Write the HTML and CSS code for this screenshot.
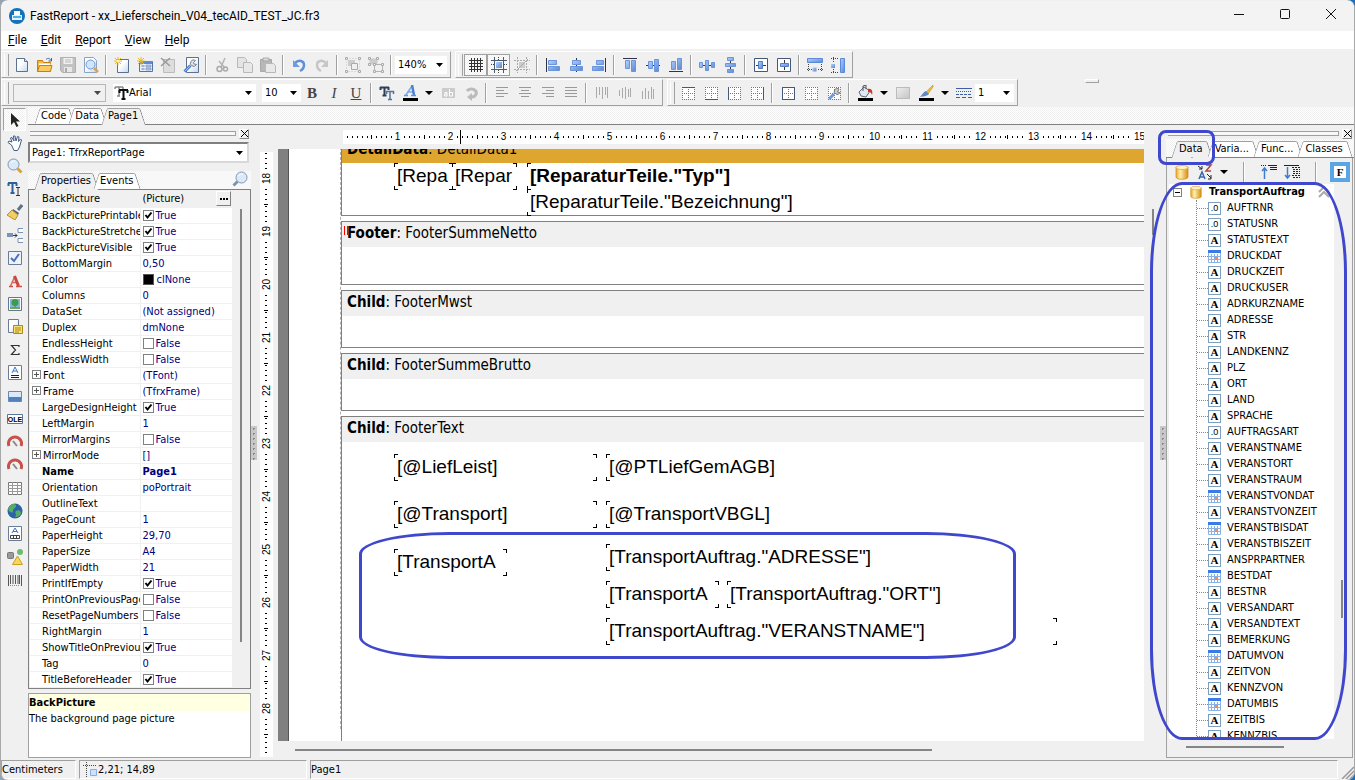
FILE: index.html
```html
<!DOCTYPE html>
<html lang="en">

<head>
    <meta charset="UTF-8">
    <meta name="viewport" content="width=device-width, initial-scale=1.0">
    <title>FastReport - xx_Lieferschein_V04_tecAID_TEST_JC.fr3</title>
    <link rel="stylesheet" href="styles.css">
</head>

<body>
    <!-- icon sprite -->
    <svg class="sprite" aria-hidden="true">
        <defs>
            <linearGradient id="blue" x1="0" y1="0" x2="1" y2="1"><stop offset="0" stop-color="#b4d2fb"/><stop offset="1" stop-color="#5b86d6"/></linearGradient>
            <linearGradient id="page" x1="0" y1="0" x2="1" y2="1"><stop offset="0.4" stop-color="#fff"/><stop offset="1" stop-color="#c4d6f0"/></linearGradient>
            <linearGradient id="gold" x1="0" y1="0" x2="1" y2="0"><stop offset="0" stop-color="#e9a928"/><stop offset="0.35" stop-color="#fff0b0"/><stop offset="1" stop-color="#d98c10"/></linearGradient>
            <linearGradient id="gray" x1="0" y1="0" x2="1" y2="1"><stop offset="0" stop-color="#eee"/><stop offset="1" stop-color="#c4c4c4"/></linearGradient>
        </defs>
        <symbol id="i-app" viewBox="0 0 16 16"><circle cx="8" cy="8" r="8" fill="#1672b8"/><path d="M5 3h6v4H5z" fill="#fff"/><path d="M3 7h10v5H3z" fill="#dff2ff"/><path d="M4 8h8v2H4z" fill="#4db4ea"/></symbol>
        <symbol id="i-new" viewBox="0 0 16 16"><path d="M2.500 1.500h8l3 3v10h-11z" fill="url(#page)" stroke="#5a7290"/><path d="M10.500 1.500v3h3" fill="#dbe6f5" stroke="#5a7290"/></symbol>
        <symbol id="i-open" viewBox="0 0 16 16"><path d="M.5 14.500v-11h5l1 2h7v9z" fill="#f4b744" stroke="#c77e12"/><path d="M2 6.500h11.500v2H2z" fill="#fff"/><path d="M.5 14.500l2-6h12.500l-1.500 6z" fill="#fbc95c" stroke="#c77e12"/><path d="M9 2.500c2-2 4-1 5 1M14.500 1v3h-3" fill="none" stroke="#3a66a8"/></symbol>
        <symbol id="i-save" viewBox="0 0 16 16"><path d="M.5 .5h15v15h-13l-2-2z" fill="#c2c2c2" stroke="#b0b0b0"/><path d="M3.500 1h9v6h-9z" fill="#f0f0f0"/><path d="M5 3h6M5 5h6" stroke="#bbb"/><path d="M4 10h8v5H4z" fill="#e8e8e8"/><path d="M5 11h2v4H5z" fill="#aaa"/></symbol>
        <symbol id="i-preview" viewBox="0 0 16 16"><path d="M1.500 .5h9l3 3v12h-12z" fill="url(#page)" stroke="#8ba3c4"/><circle cx="7.500" cy="7.500" r="4.500" fill="#cfe6fb" stroke="#6f9bd0"/><path d="M11 11l4 4" stroke="#e0a050" stroke-width="2.500"/></symbol>
        <symbol id="i-newpage" viewBox="0 0 16 16"><path d="M3.500 2.500h11v13h-11z" fill="url(#page)" stroke="#5a7290"/><path d="M4 0v8M0 4h8M1 1l6 6M7 1L1 7" stroke="#e8b820"/><circle cx="4" cy="4" r="1.500" fill="#fff6a0"/></symbol>
        <symbol id="i-newdlg" viewBox="0 0 16 16"><path d="M2.500 4.500h13v10h-13z" fill="#e8f0fb" stroke="#5574a6"/><path d="M3 4h12v3H3z" fill="#5f8ad0"/><path d="M4.500 9h3M4.500 12h3" stroke="#5574a6"/><path d="M9 8h5v2H9zM9 11h5v2H9z" fill="#b8cdec" stroke="#5574a6" stroke-width=".5"/><path d="M4 0v8M0 4h8M1 1l6 6M7 1L1 7" stroke="#e8b820"/></symbol>
        <symbol id="i-delpage" viewBox="0 0 16 16"><path d="M3.500 2.500h11v13h-11z" fill="#ddd" stroke="#bbb"/><path d="M1 1l9 8M10 1L1 9" stroke="#999" stroke-width="1.500"/></symbol>
        <symbol id="i-wrenchpage" viewBox="0 0 16 16"><path d="M3.500 .5h12v15h-12z" fill="url(#page)" stroke="#5a7290"/><path d="M1.500 14.500l6-6" stroke="#4d7fc9" stroke-width="3"/><path d="M2 14l6-6" stroke="#9cc0f0"/><path d="M12.500 3.500a3.200 3.200 0 1 0 1 4l-2.500-.5-.5-1.500z" fill="#dfe4ea" stroke="#7a8490"/></symbol>
        <symbol id="i-cut" viewBox="0 0 16 16"><path d="M11 1L7 10M5 4l6 7" stroke="#b4b4b4" stroke-width="1.500" fill="none"/><circle cx="5.500" cy="12" r="2.500" fill="none" stroke="#aaa" stroke-width="1.500"/><circle cx="11.500" cy="12" r="2" fill="none" stroke="#aaa" stroke-width="1.500"/></symbol>
        <symbol id="i-copy" viewBox="0 0 16 16"><path d="M.5 .5h7l2 2v8h-9z" fill="#e4e4e4" stroke="#b8b8b8"/><path d="M6.500 5.500h7l2 2v8h-9z" fill="#e8e8e8" stroke="#b8b8b8"/></symbol>
        <symbol id="i-paste" viewBox="0 0 16 16"><path d="M.5 2.500h11v12H.5z" fill="#b8b8b8" stroke="#a8a8a8"/><path d="M3 1h6v3H3z" fill="#d8d8d8" stroke="#999" stroke-width=".7"/><path d="M5.500 6.500h8l2 2v7h-10z" fill="#e8e8e8" stroke="#b8b8b8"/></symbol>
        <symbol id="i-undo" viewBox="0 0 16 16"><path d="M4 6c4-4 9-2 9 2 0 3-2 5-4 6" fill="none" stroke="#5f8fd8" stroke-width="2.500"/><path d="M2 3v7h7z" fill="#6f9ce0"/></symbol>
        <symbol id="i-redo" viewBox="0 0 16 16"><path d="M12 6C8 2 3 4 3 8c0 3 2 5 4 6" fill="none" stroke="#c6c6c6" stroke-width="2.500"/><path d="M14 3v7H7z" fill="#c6c6c6"/></symbol>
        <symbol id="i-group" viewBox="0 0 16 16"><path d="M3 3h7v6H3z" fill="#ccc"/><path d="M6.500 6.500h6v6h-6z" fill="#f0f0f0" stroke="#aaa"/><path d="M1.500 1.500h13v13h-13z" fill="none" stroke="#c4c4c4" stroke-dasharray="1 2"/><path d="M.5 .5h2v2h-2zM13.500 .5h2v2h-2zM.5 13.500h2v2h-2zM13.500 13.500h2v2h-2z" fill="#f0f0f0" stroke="#aaa"/></symbol>
        <symbol id="i-ungroup" viewBox="0 0 16 16"><path d="M1.500 1.500h8v6h-8z" fill="#ccc"/><path d="M6.500 7.500h8v7h-8z" fill="#f0f0f0" stroke="#b4b4b4"/><path d="M.5 .5h2v2h-2zM8.500 .5h2v2h-2zM.5 6.500h2v2h-2zM5.500 6.500h2v2h-2zM13.500 6.500h2v2h-2zM5.500 13.500h2v2h-2zM13.500 13.500h2v2h-2z" fill="#f0f0f0" stroke="#aaa"/></symbol>
        <symbol id="i-grid" viewBox="0 0 16 16"><path d="M3.500 1v14M6.500 1v14M9.500 1v14M12.500 1v14M1 3.500h14M1 6.500h14M1 9.500h14M1 12.500h14" stroke="#333"/></symbol>
        <symbol id="i-snap" viewBox="0 0 16 16"><path d="M3.500 0v16M12.500 0v16M0 3.500h16M0 12.500h16" stroke="#4a5a70"/><path d="M5 5h6v6H5z" fill="url(#blue)"/><path d="M7.500 0v3M7.500 13v3M0 7.500h3M13 7.500h3" stroke="#444" stroke-dasharray="1 1"/></symbol>
        <symbol id="i-fitgrid" viewBox="0 0 16 16"><path d="M3.500 0v16M12.500 0v16M0 3.500h16M0 12.500h16" stroke="#aaa" stroke-dasharray="2 1"/><path d="M5 5h6v6H5z" fill="#ccc"/><path d="M2 14L14 2" stroke="#aaa"/></symbol>
        <symbol id="i-aleft" viewBox="0 0 16 16"><path d="M1.500 1v14" stroke="#334"/><path d="M3.500 3.500h8v4h-8zM3.500 9.500h11v4h-11z" fill="url(#blue)" stroke="#6a94dc"/></symbol>
        <symbol id="i-acenter" viewBox="0 0 16 16"><path d="M8.500 1v14" stroke="#334"/><path d="M4.500 3.500h8v4h-8zM2.500 9.500h12v4h-12z" fill="url(#blue)" stroke="#6a94dc"/></symbol>
        <symbol id="i-aright" viewBox="0 0 16 16"><path d="M14.500 1v14" stroke="#334"/><path d="M5.500 3.500h7v4h-7zM1.500 9.500h11v4h-11z" fill="url(#blue)" stroke="#6a94dc"/></symbol>
        <symbol id="i-atop" viewBox="0 0 16 16"><path d="M1 1.500h14" stroke="#334"/><path d="M3.500 3.500h4v8h-4zM9.500 3.500h4v11h-4z" fill="url(#blue)" stroke="#6a94dc"/></symbol>
        <symbol id="i-amid" viewBox="0 0 16 16"><path d="M1 8.500h14" stroke="#334"/><path d="M3.500 4.500h4v7h-4zM9.500 2.500h4v12h-4z" fill="url(#blue)" stroke="#6a94dc"/></symbol>
        <symbol id="i-abottom" viewBox="0 0 16 16"><path d="M1 14.500h14" stroke="#334"/><path d="M3.500 4.500h4v8h-4zM9.500 1.500h4v11h-4z" fill="url(#blue)" stroke="#6a94dc"/></symbol>
        <symbol id="i-sph" viewBox="0 0 16 16"><path d="M0 8.500h16" stroke="#334"/><path d="M.5 5.500h3v5h-3zM6.500 3.500h3v10h-3zM12.500 5.500h3v5h-3z" fill="url(#blue)" stroke="#6a94dc"/></symbol>
        <symbol id="i-spv" viewBox="0 0 16 16"><path d="M8.500 0v16" stroke="#334"/><path d="M5.500 .5h6v3h-6zM3.500 6.500h10v3h-10zM5.500 12.500h6v3h-6z" fill="url(#blue)" stroke="#6a94dc"/></symbol>
        <symbol id="i-ch" viewBox="0 0 16 16"><path d="M1.500 1.500h13v13h-13z" fill="#fff" stroke="#45587a"/><path d="M3 8.500h10" stroke="#334"/><path d="M5.500 4.500h4v7h-4z" fill="url(#blue)" stroke="#5580c8"/></symbol>
        <symbol id="i-cv" viewBox="0 0 16 16"><path d="M1.500 1.500h13v13h-13z" fill="#fff" stroke="#45587a"/><path d="M8.500 3v10" stroke="#334"/><path d="M4.500 6.500h8v3h-8z" fill="url(#blue)" stroke="#5580c8"/></symbol>
        <symbol id="i-samew" viewBox="0 0 16 16"><path d="M.5 1.500h15v4H.5z" fill="url(#blue)" stroke="#5b8ad8"/><path d="M5.500 10.500h4v4h-4z" fill="url(#blue)"/><path d="M1.500 7v8M14.500 7v8M0 12.500h5M11 12.500h5" stroke="#444" stroke-dasharray="1 1"/></symbol>
        <symbol id="i-sameh" viewBox="0 0 16 16"><path d="M10.500 1.500h4v14h-4z" fill="url(#blue)" stroke="#5b8ad8"/><path d="M1 7h4v4H1z" fill="url(#blue)"/><path d="M1 1.500h8M1 15.500h8M3.500 0v5M3.500 12v4" stroke="#444" stroke-dasharray="1 1"/></symbol>
        <symbol id="i-tt" viewBox="0 0 16 16"><path d="M2 2h8M6 2v9M4 11h3M2 2v2M10 2v2" stroke="#888" stroke-width="1.500" fill="none"/><path d="M6 5h9M10.500 5v9M8.500 14h4M6.500 5v3M14.500 5v3" stroke="#111" stroke-width="2" fill="none"/></symbol>
        <symbol id="i-ttb" viewBox="0 0 16 16"><path d="M1 2.500h9M5.500 2v8.500M3.500 10.500h4M1.500 2v3M9.500 2v3" stroke="#2e3f55" stroke-width="2" fill="none"/><path d="M7 6.500h8M11 6v8.500M9 14.500h4M7.500 6v3M14.500 6v3" stroke="#54749c" stroke-width="1.500" fill="none"/></symbol>
        <symbol id="i-color" viewBox="0 0 16 16"><path d="M2 10.500h4M9 10.500h5" stroke="#5a8fe0" stroke-width="1.500"/><path d="M3.500 10.500L10 1M6 7h5" stroke="#7aa8ec" stroke-width="1.500"/><path d="M10 0l2 10" stroke="#4a80d8" stroke-width="2.500"/><path d="M1 13h15v3H1z"/></symbol>
        <symbol id="i-hl" viewBox="0 0 16 16"><path d="M2 3h13v10H2z" fill="#ccc"/><path d="M4.500 7.500h2.500v3.500h-2.500v-2h2.500M9.500 4v7h3V7.500h-3" fill="none" stroke="#fff"/></symbol>
        <symbol id="i-rot" viewBox="0 0 16 16"><path d="M4 6a5 4 0 1 1 5 6" fill="none" stroke="#bbb" stroke-width="3"/><path d="M9 8v8l-5-4z" fill="#bbb"/></symbol>
        <symbol id="i-tl" viewBox="0 0 16 16"><path d="M2 2.500h12M2 5.500h8M2 8.500h12M2 11.500h8" stroke="#999"/></symbol>
        <symbol id="i-tc" viewBox="0 0 16 16"><path d="M2 2.500h12M4 5.500h8M2 8.500h12M4 11.500h8" stroke="#999"/></symbol>
        <symbol id="i-tr" viewBox="0 0 16 16"><path d="M2 2.500h12M6 5.500h8M2 8.500h12M6 11.500h8" stroke="#999"/></symbol>
        <symbol id="i-tj" viewBox="0 0 16 16"><path d="M2 2.500h12M2 5.500h12M2 8.500h12M2 11.500h12" stroke="#999"/></symbol>
        <symbol id="i-vt" viewBox="0 0 16 16"><path d="M2.500 2v11M5.500 2v8M8.500 2v12M11.500 2v8M13.500 2v11" stroke="#aaa"/></symbol>
        <symbol id="i-vm" viewBox="0 0 16 16"><path d="M2.500 5v6M5.500 3v10M8.500 2v12M11.500 4v8M13.500 3v9" stroke="#aaa"/></symbol>
        <symbol id="i-vb" viewBox="0 0 16 16"><path d="M2.500 6v8M5.500 3v11M8.500 6v8M11.500 2v12M13.500 4v10" stroke="#aaa"/></symbol>
        <symbol id="i-dots" viewBox="0 0 16 16"><path d="M2 2h12v12H2z" fill="#fff"/><path d="M2 2.500h13M2 8.500h13M2 14.500h13M2.500 2v13M8.500 2v13M14.500 2v13" stroke="#777" stroke-dasharray="1 1"/></symbol>
        <symbol id="i-ft" viewBox="0 0 16 16"><use href="#i-dots"/><path d="M2 2.500h13" stroke="#45587a"/></symbol>
        <symbol id="i-fb" viewBox="0 0 16 16"><use href="#i-dots"/><path d="M2 14.500h13" stroke="#45587a"/></symbol>
        <symbol id="i-fl" viewBox="0 0 16 16"><use href="#i-dots"/><path d="M2.500 2v13" stroke="#45587a"/></symbol>
        <symbol id="i-fr" viewBox="0 0 16 16"><use href="#i-dots"/><path d="M14.500 2v13" stroke="#45587a"/></symbol>
        <symbol id="i-fall" viewBox="0 0 16 16"><use href="#i-dots"/><path d="M2.500 2.500h12v12h-12z" stroke="#45587a" fill="none"/></symbol>
        <symbol id="i-fed" viewBox="0 0 16 16"><use href="#i-dots"/><path d="M3 14l5-5" stroke="#6d9ae0" stroke-width="3"/><path d="M13 4a3 3 0 1 0 1 3.500l-2.500-.5z" fill="#ccc" stroke="#777"/></symbol>
        <symbol id="i-bucket" viewBox="0 0 16 16"><path d="M2 7l5-5 6 4-4 6-5-1z" fill="#dfe8f2" stroke="#56697f"/><path d="M6 6V1l3-1v4" fill="none" stroke="#555"/><path d="M11 4c4-1 5 3 4 6-1-3-2-3-4-3z" fill="#d33322"/><path d="M1 13h15v3H1z"/></symbol>
        <symbol id="i-fill" viewBox="0 0 16 16"><rect x="1.500" y="2.500" width="13" height="11" fill="url(#gray)" stroke="#bbb"/></symbol>
        <symbol id="i-brush" viewBox="0 0 16 16"><path d="M15 0L8 7l2 2 5-7z" fill="#e8bc40" stroke="#b08820" stroke-width=".5"/><path d="M8 6l3 3c-3 3-6 2-9 3 2-2 3-5 6-6z" fill="#5f87c0"/><path d="M1 13h15v3H1z"/></symbol>
        <symbol id="i-lines" viewBox="0 0 16 16"><path d="M0 3.500h16" stroke="#3d5fa8"/><path d="M0 6.500h16" stroke="#3d5fa8" stroke-dasharray="1 1"/><path d="M0 9.500h16" stroke="#3d5fa8" stroke-dasharray="3 1"/><path d="M0 12.500h16" stroke="#3d5fa8" stroke-dasharray="4 2"/></symbol>
        <symbol id="i-arrow" viewBox="0 0 16 16"><path d="M4 1v12l3-3 2.500 5 2-1L9 9.500h4z" fill="#222"/></symbol>
        <symbol id="i-hand" viewBox="0 0 16 16"><path d="M4.500 10L1 7.500l1-1.500 3 1L3.500 3l1.500-.5L7 6l-.5-5H8l1 5 1.500-4.500 1.500.5-.5 4.500 2-2.500 1 1-2 7-2 3.500H7z" fill="#fff" stroke="#3e5f8a"/></symbol>
        <symbol id="i-zoom" viewBox="0 0 16 16"><circle cx="6.500" cy="6.500" r="5.500" fill="#dbeaf8" stroke="#8197b4"/><path d="M4 5a3.500 3.500 0 0 1 4-2" stroke="#fff" fill="none"/><path d="M10.500 10.500l4 4" stroke="#d8a23a" stroke-width="3"/></symbol>
        <symbol id="i-find" viewBox="0 0 16 16"><circle cx="9.500" cy="6.500" r="5.500" fill="#dbeaf8" stroke="#8197b4"/><path d="M7 5a3.500 3.500 0 0 1 4-2" stroke="#fff" fill="none"/><path d="M5.500 10.500l-4 4" stroke="#7d93b4" stroke-width="3"/></symbol>
        <symbol id="i-text" viewBox="0 0 16 16"><path d="M1 2h9M5.500 2v10M3.500 12h4M1.500 2v3M9.500 2v3" stroke="#2b6196" stroke-width="2" fill="none"/><path d="M9 6.500h4M9 14.500h4M11 7v7" stroke="#333" fill="none"/></symbol>
        <symbol id="i-fmt" viewBox="0 0 16 16"><path d="M15 1l-4 5" stroke="#5f7189" stroke-width="3"/><path d="M6 5l6 4-1 2-6-4z" fill="#4b5c86"/><path d="M5 6l6 5-3 5-8-5z" fill="#f1cf62" stroke="#b89028"/></symbol>
        <symbol id="i-band" viewBox="0 0 16 16"><path d="M0 6h6v4H0z" fill="#7c93b8"/><path d="M6 8.500h4M8 6.500l2 2-2 2" stroke="#333" fill="none"/><path d="M16 1.500h-5v4h5M16 11.500h-5v4h5" fill="#fff" stroke="#7c93b8"/></symbol>
        <symbol id="i-check" viewBox="0 0 16 16"><path d="M1.500 1.500h13v13h-13z" fill="#eef3fa" stroke="#6c7c96"/><path d="M4 8l3 3 5-7" stroke="#4a70b8" stroke-width="2" fill="none"/></symbol>
        <symbol id="i-a" viewBox="0 0 16 16"><path d="M3.500 13L8 3M5 9.500h6" stroke="#d86860" stroke-width="1.500"/><path d="M7.500 3l4 10" stroke="#c84840" stroke-width="3"/><path d="M2 13.500h4M9 13.500h6" stroke="#d05048" stroke-width="1.500"/></symbol>
        <symbol id="i-pic" viewBox="0 0 16 16"><path d="M1.500 1.500h13v13h-13z" fill="#fff" stroke="#66768c"/><path d="M3 3h10v10H3z" fill="#86b4ea"/><circle cx="8" cy="6.500" r="3.500" fill="#3d9c48"/><path d="M3 11h10v2H3z" fill="#63b04c"/><path d="M7.500 9h1v3h-1z" fill="#a06830"/></symbol>
        <symbol id="i-sub" viewBox="0 0 16 16"><path d="M1.500 .5h10v13h-10z" fill="url(#page)" stroke="#6b7b92"/><path d="M6.500 6.500h9v8h-9z" fill="#f7df70" stroke="#a98b1c"/><path d="M8 9h6M8 11h6M8 13h4" stroke="#a98b1c"/></symbol>
        <symbol id="i-sum" viewBox="0 0 16 16"><path d="M12 5V3.500H4.500l4 4.500-4 4.500H12V11" fill="none" stroke="#333" stroke-width="1.200"/></symbol>
        <symbol id="i-rich" viewBox="0 0 16 16"><path d="M1.500 .5h13v14h-13z" fill="#fff" stroke="#6c7c96"/><path d="M5 8l3-6 3 6M6 6h4" stroke="#3f77c8" fill="none"/><path d="M4 10.500h8M4 12.500h8" stroke="#222"/></symbol>
        <symbol id="i-grad" viewBox="0 0 16 16"><path d="M1.500 3.500h13v10h-13z" fill="#dce9f8" stroke="#6888b4"/><path d="M2 9h12v4H2z" fill="#4f80bf"/></symbol>
        <symbol id="i-ole" viewBox="0 0 16 16"><path d="M.5 3.500h15v9H.5z" fill="#fff" stroke="#5b7599"/><text x="8" y="11" font-size="7" font-weight="bold" text-anchor="middle" font-family="Liberation Sans, sans-serif">OLE</text></symbol>
        <symbol id="i-gauge" viewBox="0 0 16 16"><path d="M2 12a6.500 6.500 0 1 1 12 0" fill="none" stroke="#c8524a" stroke-width="3"/><path d="M10 12L6 7" stroke="#888" stroke-width="2"/></symbol>
        <symbol id="i-table" viewBox="0 0 16 16"><path d="M1.500 2.500h13v12h-13z" fill="#fff" stroke="#777"/><path d="M1 5.500h14M1 8.500h14M1 11.500h14M5.500 2v13M10.500 2v13" stroke="#999"/></symbol>
        <symbol id="i-globe" viewBox="0 0 16 16"><circle cx="8" cy="8" r="7.500" fill="#2c62a8"/><path d="M3 3c3-3 6-2 6 0S6 5 6 8s-3 1-4 0-1-3 1-5zM9 8c3-2 5 0 5 2s-3 4-5 4 1-2 0-3-1-2 0-3z" fill="#55ae62"/></symbol>
        <symbol id="i-cell" viewBox="0 0 16 16"><path d="M1.500 .5h13v14h-13z" fill="#fff" stroke="#6c7c96"/><path d="M5 7l3-5 3 5M6 5.500h4" stroke="#3f77c8" fill="none"/><path d="M3.500 9.500h9v3h-9zM6.500 9v4M9.500 9v4" stroke="#444" fill="none"/></symbol>
        <symbol id="i-shape" viewBox="0 0 16 16"><rect x=".5" y="3.500" width="6" height="6" rx="1" fill="#999" stroke="#777"/><circle cx="13" cy="3" r="3" fill="#6cbb70"/><path d="M10.500 7l5 8.500h-10z" fill="#f9d65c" stroke="#c9a020"/></symbol>
        <symbol id="i-bar" viewBox="0 0 16 16"><path d="M1.500 3v11M3.500 3v9M6 3v9M8.500 3v9M11 3v9M12.500 3v9M14.500 3v11" stroke="#555"/><path d="M3 13.500h10" stroke="#888" stroke-dasharray="1 1"/></symbol>
        <symbol id="i-db" viewBox="0 0 16 16"><path d="M2 3v10c0 3 12 3 12 0V3z" fill="url(#gold)" stroke="#d08a18" stroke-width=".7"/><ellipse cx="8" cy="3.500" rx="6" ry="2" fill="#fff3c4" stroke="#d9a030" stroke-width=".7"/></symbol>
        <symbol id="i-sort" viewBox="0 0 16 16"><path d="M2 15l3-7 3 7M3 13h4" stroke="#3868b0" stroke-width="1.500" fill="none"/><path d="M9 1h5L9 7h5" stroke="#a84848" stroke-width="1.500" fill="none"/><path d="M1 2l4 3M5 2v3H2M10 10l4 4M14 11v4h-3" stroke="#222" fill="none"/></symbol>
        <symbol id="i-up" viewBox="0 0 16 16"><path d="M3.500 4v11M1 7l2.500-3L6 7" stroke="#3c7fd0" stroke-width="1.500" fill="none"/><path d="M0 1.500h6" stroke="#222" stroke-dasharray="1 1"/><path d="M7 1.500h9M9 3.500h7M9 5.500h7" stroke="#222"/></symbol>
        <symbol id="i-down" viewBox="0 0 16 16"><path d="M3.500 3v11M1 11l2.500 3L6 11" stroke="#3c7fd0" stroke-width="1.500" fill="none"/><path d="M0 1.500h15" stroke="#222"/><path d="M8 3.500h8M9 5.500h7M9 7.500h7M9 9.500h7M8 11.500h8M9 13.500h7" stroke="#222" stroke-dasharray="2 1"/></symbol>
        <symbol id="i-cal" viewBox="0 0 13 13"><path d="M.5 .5h12v12H.5z" fill="#fff" stroke="#8fb2e4"/><path d="M0 0h13v3H0z" fill="#3a7be8"/><path d="M3.500 4v9M6.500 4v9M9.500 4v9M0 6.500h13M0 9.500h13" stroke="#8ab0e4"/><path d="M7 7h3v3H7z" fill="#f08860"/></symbol>
        <symbol id="i-mouse" viewBox="0 0 16 16"><path d="M1 3.500h14M4.500 0v16" stroke="#444" stroke-dasharray="1 1"/><path d="M8.500 7.500h6v6h-6z" fill="#cfe0fb" stroke="#86aeea"/></symbol>
        <symbol id="i-chev" viewBox="0 0 12 14"><path d="M1 7l5-5 5 5M1 12l5-5 5 5" fill="none" stroke="#aaa" stroke-width="2"/></symbol>
    </svg>

    <div class="window">
        <header class="titlebar">
            <svg class="icon"><use href="#i-app"/></svg>
            <h1>FastReport - xx_Lieferschein_V04_tecAID_TEST_JC.fr3</h1>
            <div class="winbuttons">
                <button type="button" aria-label="Minimize"><svg width="12" height="12"><path d="M1 6.500h10" stroke="#111"/></svg></button>
                <button type="button" aria-label="Maximize"><svg width="12" height="12"><rect x="1.500" y="1.500" width="9" height="9" rx="1" fill="none" stroke="#111"/></svg></button>
                <button type="button" aria-label="Close"><svg width="12" height="12"><path d="M1 1l10 10M11 1L1 11" stroke="#111"/></svg></button>
            </div>
        </header>

        <nav class="menubar">
            <a href="#"><u>F</u>ile</a>
            <a href="#"><u>E</u>dit</a>
            <a href="#"><u>R</u>eport</a>
            <a href="#"><u>V</u>iew</a>
            <a href="#"><u>H</u>elp</a>
        </nav>

        <div class="toolbars">
            <div class="toolrow">
                <div class="toolbar">
                    <button type="button" aria-label="New"><svg><use href="#i-new"/></svg></button>
                    <button type="button" aria-label="Open"><svg><use href="#i-open"/></svg></button>
                    <button type="button" aria-label="Save"><svg><use href="#i-save"/></svg></button>
                    <button type="button" aria-label="Preview"><svg><use href="#i-preview"/></svg></button>
                    <i class="sep"></i>
                    <button type="button" aria-label="New page"><svg><use href="#i-newpage"/></svg></button>
                    <button type="button" aria-label="New dialog"><svg><use href="#i-newdlg"/></svg></button>
                    <button type="button" aria-label="Delete page"><svg><use href="#i-delpage"/></svg></button>
                    <button type="button" aria-label="Page settings"><svg><use href="#i-wrenchpage"/></svg></button>
                    <i class="sep"></i>
                    <button type="button" aria-label="Cut"><svg><use href="#i-cut"/></svg></button>
                    <button type="button" aria-label="Copy"><svg><use href="#i-copy"/></svg></button>
                    <button type="button" aria-label="Paste"><svg><use href="#i-paste"/></svg></button>
                    <i class="sep"></i>
                    <button type="button" aria-label="Undo"><svg><use href="#i-undo"/></svg></button>
                    <button type="button" aria-label="Redo"><svg><use href="#i-redo"/></svg></button>
                    <i class="sep"></i>
                    <button type="button" aria-label="Group"><svg><use href="#i-group"/></svg></button>
                    <button type="button" aria-label="Ungroup"><svg><use href="#i-ungroup"/></svg></button>
                    <i class="sep"></i>
                    <select class="zoom" aria-label="Zoom"><option>140%</option></select>
                </div>
                <div class="toolbar">
                    <button type="button" class="pressed" aria-label="Show grid"><svg><use href="#i-grid"/></svg></button>
                    <button type="button" class="pressed" aria-label="Align to grid"><svg><use href="#i-snap"/></svg></button>
                    <button type="button" aria-label="Fit to grid"><svg><use href="#i-fitgrid"/></svg></button>
                    <i class="sep"></i>
                    <button type="button" aria-label="Align left"><svg><use href="#i-aleft"/></svg></button>
                    <button type="button" aria-label="Align center"><svg><use href="#i-acenter"/></svg></button>
                    <button type="button" aria-label="Align right"><svg><use href="#i-aright"/></svg></button>
                    <i class="sep"></i>
                    <button type="button" aria-label="Align top"><svg><use href="#i-atop"/></svg></button>
                    <button type="button" aria-label="Align middle"><svg><use href="#i-amid"/></svg></button>
                    <button type="button" aria-label="Align bottom"><svg><use href="#i-abottom"/></svg></button>
                    <i class="sep"></i>
                    <button type="button" aria-label="Space horizontally"><svg><use href="#i-sph"/></svg></button>
                    <button type="button" aria-label="Space vertically"><svg><use href="#i-spv"/></svg></button>
                    <i class="sep"></i>
                    <button type="button" aria-label="Center horizontally"><svg><use href="#i-ch"/></svg></button>
                    <button type="button" aria-label="Center vertically"><svg><use href="#i-cv"/></svg></button>
                    <i class="sep"></i>
                    <button type="button" aria-label="Same width"><svg><use href="#i-samew"/></svg></button>
                    <button type="button" aria-label="Same height"><svg><use href="#i-sameh"/></svg></button>
                </div>
            </div>
            <div class="toolrow">
                <div class="toolbar">
                    <select class="style" aria-label="Style" disabled><option></option></select>
                    <div class="fontbox">
                        <svg><use href="#i-tt"/></svg>
                        <select class="font" aria-label="Font"><option>Arial</option></select>
                    </div>
                    <select class="size" aria-label="Font size"><option>10</option></select>
                    <button type="button" class="letter"><b>B</b></button>
                    <button type="button" class="letter"><em>I</em></button>
                    <button type="button" class="letter"><u>U</u></button>
                    <i class="sep"></i>
                    <button type="button" aria-label="Font settings"><svg><use href="#i-ttb"/></svg></button>
                    <button type="button" aria-label="Font color"><svg><use href="#i-color"/></svg></button>
                    <button type="button" class="drop" aria-label="Choose font color"></button>
                    <button type="button" aria-label="Highlight"><svg><use href="#i-hl"/></svg></button>
                    <button type="button" aria-label="Rotation"><svg><use href="#i-rot"/></svg></button>
                    <i class="sep"></i>
                    <button type="button" aria-label="Text left"><svg><use href="#i-tl"/></svg></button>
                    <button type="button" aria-label="Text center"><svg><use href="#i-tc"/></svg></button>
                    <button type="button" aria-label="Text right"><svg><use href="#i-tr"/></svg></button>
                    <button type="button" aria-label="Justify"><svg><use href="#i-tj"/></svg></button>
                    <i class="sep"></i>
                    <button type="button" aria-label="Text top"><svg><use href="#i-vt"/></svg></button>
                    <button type="button" aria-label="Text middle"><svg><use href="#i-vm"/></svg></button>
                    <button type="button" aria-label="Text bottom"><svg><use href="#i-vb"/></svg></button>
                </div>
                <div class="toolbar">
                    <button type="button" aria-label="Top line"><svg><use href="#i-ft"/></svg></button>
                    <button type="button" aria-label="Bottom line"><svg><use href="#i-fb"/></svg></button>
                    <button type="button" aria-label="Left line"><svg><use href="#i-fl"/></svg></button>
                    <button type="button" aria-label="Right line"><svg><use href="#i-fr"/></svg></button>
                    <i class="sep"></i>
                    <button type="button" aria-label="All lines"><svg><use href="#i-fall"/></svg></button>
                    <button type="button" aria-label="No lines"><svg><use href="#i-dots"/></svg></button>
                    <button type="button" aria-label="Edit frame"><svg><use href="#i-fed"/></svg></button>
                    <i class="sep"></i>
                    <button type="button" aria-label="Fill color"><svg><use href="#i-bucket"/></svg></button>
                    <button type="button" class="drop" aria-label="Choose fill color"></button>
                    <button type="button" aria-label="Fill"><svg><use href="#i-fill"/></svg></button>
                    <button type="button" aria-label="Line color"><svg><use href="#i-brush"/></svg></button>
                    <button type="button" class="drop" aria-label="Choose line color"></button>
                    <button type="button" aria-label="Line style"><svg><use href="#i-lines"/></svg></button>
                    <select class="size" aria-label="Line width"><option>1</option></select>
                </div>
                <i class="stub"></i>
            </div>
        </div>

        <div class="main">
            <div class="objectbar">
                <button type="button" class="pressed" aria-label="Select"><svg><use href="#i-arrow"/></svg></button>
                <button type="button" aria-label="Hand"><svg><use href="#i-hand"/></svg></button>
                <button type="button" aria-label="Zoom tool"><svg><use href="#i-zoom"/></svg></button>
                <button type="button" aria-label="Edit text"><svg><use href="#i-text"/></svg></button>
                <button type="button" aria-label="Copy format"><svg><use href="#i-fmt"/></svg></button>
                <button type="button" aria-label="Insert band"><svg><use href="#i-band"/></svg></button>
                <button type="button" aria-label="Check box"><svg><use href="#i-check"/></svg></button>
                <button type="button" aria-label="Text object"><svg><use href="#i-a"/></svg></button>
                <button type="button" aria-label="Picture"><svg><use href="#i-pic"/></svg></button>
                <button type="button" aria-label="Subreport"><svg><use href="#i-sub"/></svg></button>
                <button type="button" aria-label="System text"><svg><use href="#i-sum"/></svg></button>
                <button type="button" aria-label="Rich text"><svg><use href="#i-rich"/></svg></button>
                <button type="button" aria-label="Gradient"><svg><use href="#i-grad"/></svg></button>
                <button type="button" aria-label="OLE object"><svg><use href="#i-ole"/></svg></button>
                <button type="button" aria-label="Gauge"><svg><use href="#i-gauge"/></svg></button>
                <button type="button" aria-label="Interval gauge"><svg><use href="#i-gauge"/></svg></button>
                <button type="button" aria-label="Table"><svg><use href="#i-table"/></svg></button>
                <button type="button" aria-label="Map"><svg><use href="#i-globe"/></svg></button>
                <button type="button" aria-label="Cellular text"><svg><use href="#i-cell"/></svg></button>
                <button type="button" aria-label="Shapes"><svg><use href="#i-shape"/></svg></button>
                <button type="button" aria-label="Barcode"><svg><use href="#i-bar"/></svg></button>
            </div>

            <div class="content">
                <div class="tabs pagetabs">
                    <button type="button">Code</button>
                    <button type="button">Data</button>
                    <button type="button" class="active">Page1</button>
                </div>

                <div class="panes">
                    <aside class="inspector">
                        <div class="handle"><i></i><button type="button" aria-label="Close inspector"><svg width="7" height="7"><path d="M0 0l7 7M7 0L0 7" stroke="#000"/></svg></button></div>
                        <select class="objects" aria-label="Object"><option>Page1: TfrxReportPage</option></select>
                        <div class="tabline">
                            <div class="tabs">
                                <button type="button" class="active">Properties</button>
                                <button type="button">Events</button>
                            </div>
                            <svg class="find"><use href="#i-find"/></svg>
                        </div>
                        <div class="propbox">
                            <table class="props">
                                <tr class="selected"><th>BackPicture</th><td>(Picture)<button type="button" class="dots" aria-label="Edit picture"></button></td></tr>
                                <tr><th>BackPicturePrintable</th><td><label><input type="checkbox" checked>True</label></td></tr>
                                <tr><th>BackPictureStretched</th><td><label><input type="checkbox" checked>True</label></td></tr>
                                <tr><th>BackPictureVisible</th><td><label><input type="checkbox" checked>True</label></td></tr>
                                <tr><th>BottomMargin</th><td>0,50</td></tr>
                                <tr><th>Color</th><td><i class="swatch"></i>clNone</td></tr>
                                <tr><th>Columns</th><td>0</td></tr>
                                <tr><th>DataSet</th><td>(Not assigned)</td></tr>
                                <tr><th>Duplex</th><td>dmNone</td></tr>
                                <tr><th>EndlessHeight</th><td><label><input type="checkbox">False</label></td></tr>
                                <tr><th>EndlessWidth</th><td><label><input type="checkbox">False</label></td></tr>
                                <tr class="group"><th><i class="plus"></i>Font</th><td>(TFont)</td></tr>
                                <tr class="group"><th><i class="plus"></i>Frame</th><td>(TfrxFrame)</td></tr>
                                <tr><th>LargeDesignHeight</th><td><label><input type="checkbox" checked>True</label></td></tr>
                                <tr><th>LeftMargin</th><td>1</td></tr>
                                <tr><th>MirrorMargins</th><td><label><input type="checkbox">False</label></td></tr>
                                <tr class="group"><th><i class="plus"></i>MirrorMode</th><td>[]</td></tr>
                                <tr class="bold"><th>Name</th><td>Page1</td></tr>
                                <tr><th>Orientation</th><td>poPortrait</td></tr>
                                <tr><th>OutlineText</th><td></td></tr>
                                <tr><th>PageCount</th><td>1</td></tr>
                                <tr><th>PaperHeight</th><td>29,70</td></tr>
                                <tr><th>PaperSize</th><td>A4</td></tr>
                                <tr><th>PaperWidth</th><td>21</td></tr>
                                <tr><th>PrintIfEmpty</th><td><label><input type="checkbox" checked>True</label></td></tr>
                                <tr><th>PrintOnPreviousPage</th><td><label><input type="checkbox">False</label></td></tr>
                                <tr><th>ResetPageNumbers</th><td><label><input type="checkbox">False</label></td></tr>
                                <tr><th>RightMargin</th><td>1</td></tr>
                                <tr><th>ShowTitleOnPrevious</th><td><label><input type="checkbox" checked>True</label></td></tr>
                                <tr><th>Tag</th><td>0</td></tr>
                                <tr><th>TitleBeforeHeader</th><td><label><input type="checkbox" checked>True</label></td></tr>
                            </table>
                            <div class="propscroll"><i></i></div>
                        </div>
                        <div class="hint">
                            <h2>BackPicture</h2>
                            <p>The background page picture</p>
                        </div>
                    </aside>

                    <div class="splitter"><i></i></div>

                    <section class="designer">
                        <div class="vruler">
                            <span>18</span><span>19</span><span>20</span><span>21</span><span>22</span><span>23</span><span>24</span><span>25</span><span>26</span><span>27</span><span>28</span><span></span>
                        </div>
                        <div class="sheet">
                            <div class="hruler">
                                <span>1</span><span>2</span><span>3</span><span>4</span><span>5</span><span>6</span><span>7</span><span>8</span><span>9</span><span>10</span><span>11</span><span>12</span><span>13</span><span>14</span><span>15</span>
                                <i class="cursor"></i>
                            </div>
                            <div class="canvas">
                                <div class="page">
                                    <div class="band data">
                                        <h3><b>DetailData</b>: DetailData1</h3>
                                        <div class="obj o1">[Repa</div>
                                        <div class="obj o2">[Repar</div>
                                        <div class="obj o3"><b>[ReparaturTeile."Typ"]</b></div>
                                        <div class="obj o4">[ReparaturTeile."Bezeichnung"]</div>
                                    </div>
                                    <div class="band netto"><h3 class="marked"><b>Footer</b>: FooterSummeNetto</h3></div>
                                    <div class="band"><h3><b>Child</b>: FooterMwst</h3></div>
                                    <div class="band"><h3><b>Child</b>: FooterSummeBrutto</h3></div>
                                    <div class="band text">
                                        <h3><b>Child</b>: FooterText</h3>
                                        <div class="obj t1">[@LiefLeist]</div>
                                        <div class="obj t2">[@PTLiefGemAGB]</div>
                                        <div class="obj t3">[@Transport]</div>
                                        <div class="obj t4">[@TransportVBGL]</div>
                                        <div class="obj t5">[TransportA</div>
                                        <div class="obj t6">[TransportAuftrag."ADRESSE"]</div>
                                        <div class="obj t7">[TransportA</div>
                                        <div class="obj t8">[TransportAuftrag."ORT"]</div>
                                        <div class="obj t9">[TransportAuftrag."VERANSTNAME"]</div>
                                        <i class="mark mark-address"></i>
                                    </div>
                                </div>
                            </div>
                            <div class="hscroll"><i></i></div>
                        </div>
                        <div class="vscroll"><i></i></div>
                    </section>

                    <div class="splitter"><i></i></div>

                    <aside class="datapane">
                        <div class="handle"><i></i><button type="button" aria-label="Close data pane"><svg width="7" height="7"><path d="M0 0l7 7M7 0L0 7" stroke="#000"/></svg></button></div>
                        <div class="tabs">
                            <button type="button" class="active">Data</button>
                            <button type="button">Varia...</button>
                            <button type="button">Func...</button>
                            <button type="button">Classes</button>
                        </div>
                        <div class="databox">
                            <div class="datatools">
                                <button type="button" aria-label="Datasets"><svg><use href="#i-db"/></svg></button>
                                <button type="button" aria-label="Sort"><svg><use href="#i-sort"/></svg></button>
                                <button type="button" class="drop" aria-label="Sort options"></button>
                                <i class="sep"></i>
                                <button type="button" aria-label="Collapse all"><svg><use href="#i-up"/></svg></button>
                                <button type="button" aria-label="Expand all"><svg><use href="#i-down"/></svg></button>
                                <i class="sep"></i>
                                <button type="button" class="field" aria-label="Show fields"><b>F</b></button>
                            </div>
                            <div class="treebox">
                                <div class="tree">
                                    <div class="root"><i class="minus"></i><svg><use href="#i-db"/></svg><b>TransportAuftrag</b><svg class="chev"><use href="#i-chev"/></svg></div>
                                    <ul>
                                        <li><i class="num">.0</i>AUFTRNR</li>
                                        <li><i class="num">.0</i>STATUSNR</li>
                                        <li><i class="str">A</i>STATUSTEXT</li>
                                        <li><svg><use href="#i-cal"/></svg>DRUCKDAT</li>
                                        <li><i class="str">A</i>DRUCKZEIT</li>
                                        <li><i class="str">A</i>DRUCKUSER</li>
                                        <li><i class="str">A</i>ADRKURZNAME</li>
                                        <li><i class="str">A</i>ADRESSE</li>
                                        <li><i class="str">A</i>STR</li>
                                        <li><i class="str">A</i>LANDKENNZ</li>
                                        <li><i class="str">A</i>PLZ</li>
                                        <li><i class="str">A</i>ORT</li>
                                        <li><i class="str">A</i>LAND</li>
                                        <li><i class="str">A</i>SPRACHE</li>
                                        <li><i class="num">.0</i>AUFTRAGSART</li>
                                        <li><i class="str">A</i>VERANSTNAME</li>
                                        <li><i class="str">A</i>VERANSTORT</li>
                                        <li><i class="str">A</i>VERANSTRAUM</li>
                                        <li><svg><use href="#i-cal"/></svg>VERANSTVONDAT</li>
                                        <li><i class="str">A</i>VERANSTVONZEIT</li>
                                        <li><svg><use href="#i-cal"/></svg>VERANSTBISDAT</li>
                                        <li><i class="str">A</i>VERANSTBISZEIT</li>
                                        <li><i class="str">A</i>ANSPRPARTNER</li>
                                        <li><svg><use href="#i-cal"/></svg>BESTDAT</li>
                                        <li><i class="str">A</i>BESTNR</li>
                                        <li><i class="str">A</i>VERSANDART</li>
                                        <li><i class="str">A</i>VERSANDTEXT</li>
                                        <li><i class="str">A</i>BEMERKUNG</li>
                                        <li><svg><use href="#i-cal"/></svg>DATUMVON</li>
                                        <li><i class="str">A</i>ZEITVON</li>
                                        <li><i class="str">A</i>KENNZVON</li>
                                        <li><svg><use href="#i-cal"/></svg>DATUMBIS</li>
                                        <li><i class="str">A</i>ZEITBIS</li>
                                        <li><i class="str">A</i>KENNZBIS</li>
                                    </ul>
                                </div>
                                <div class="treescroll"><i></i></div>
                            </div>
                            <div class="treehscroll"><i></i></div>
                        </div>
                        <i class="mark mark-tab"></i>
                        <i class="mark mark-tree"></i>
                    </aside>
                </div>
            </div>
        </div>

        <footer class="statusbar">
            <span class="units">Centimeters</span>
            <span class="pos"><svg><use href="#i-mouse"/></svg>2,21; 14,89</span>
            <span class="name">Page1</span>
            <svg class="grip" width="13" height="13"><path d="M1 13L13 1M5 13l8-8M9 13l4-4" stroke="#999" stroke-width="1.500"/></svg>
        </footer>
    </div>
</body>

</html>
```
FILE: styles.css
```css
* {
    box-sizing: border-box;
}

body {
    margin: 0;
    font-family: "DejaVu Sans Condensed", "Noto Sans", sans-serif;
    font-size: 11px;
    line-height: 16px;
    color: #000;
    background: linear-gradient(90deg, #93a4b2, #2f77b5 40%, #1f70b8);
}

h1, h2, h3, p, ul {
    margin: 0;
    padding: 0;
    font-size: inherit;
}

button, select, input {
    margin: 0;
    padding: 0;
    border: none;
    border-radius: 0;
    background: none;
    font: inherit;
    color: inherit;
}

svg {
    width: 16px;
    height: 16px;
    flex: none;
}

.sprite {
    position: absolute;
    width: 0;
    height: 0;
}

.window {
    display: flex;
    flex-direction: column;
    height: 100vh;
    padding-top: 1px;
    border-left: 1px solid #a8a8a8;
    border-right: 1px solid #a8a8a8;
    border-radius: 8px;
    background: #f0f0f0;
    overflow: hidden;
}

/* title and menu */
.titlebar {
    display: flex;
    align-items: center;
    gap: 5px;
    height: 30px;
    padding-left: 8px;
    background: #f3f3f3;
    font-family: Roboto, sans-serif;
    font-size: 12px;
}

.titlebar h1 {
    flex: 1;
    font-weight: normal;
}

.winbuttons {
    display: flex;
}

.winbuttons button {
    width: 46px;
    height: 28px;
}

.winbuttons svg {
    width: 12px;
    height: 12px;
}

.menubar {
    display: flex;
    gap: 14px;
    height: 18px;
    padding-left: 7px;
    background: #fff;
    font-family: Roboto, sans-serif;
    font-size: 12px;
    line-height: 18px;
}

.menubar a {
    color: #000;
    text-decoration: none;
}

/* toolbars */
.toolbars {
    padding: 2px 0 0;
}

.toolrow {
    display: flex;
    gap: 4px;
    height: 28px;
}

.toolbar {
    display: flex;
    align-items: center;
    height: 27px;
    padding-right: 3px;
    border: 1px solid #fff;
    border-right-color: #a0a0a0;
    border-bottom-color: #a0a0a0;
}

.toolbar::before {
    content: "";
    width: 3px;
    height: 22px;
    margin: 0 1px 0 2px;
    border-left: 1px solid #fff;
    border-right: 1px solid #a0a0a0;
}

.toolbar button,
.objectbar button,
.datatools button {
    display: flex;
    align-items: center;
    justify-content: center;
    width: 23px;
    height: 22px;
}

.pressed {
    border: 1px solid #a0a0a0;
    border-right-color: #fff;
    border-bottom-color: #fff;
    background: repeating-conic-gradient(#f0f0f0 0 25%, #fff 0 50%) 0 0 / 2px 2px;
}

.toolbar .pressed {
    border: 1px solid #a0a0a0;
    background: repeating-conic-gradient(#f0f0f0 0 25%, #fff 0 50%) 0 0 / 2px 2px;
}

.toolbar .sep,
.datatools .sep {
    width: 2px;
    height: 20px;
    margin: 0 3px;
    border-left: 1px solid #a0a0a0;
    border-right: 1px solid #fff;
}

.toolbar .letter {
    width: 22px;
    font-family: "Liberation Serif", serif;
    font-size: 15px;
    color: #444;
}

.toolbar .drop,
.datatools .drop {
    width: 15px;
}

.drop::after {
    content: "";
    border: 4px solid transparent;
    border-top-color: #000;
    border-bottom: none;
}

select {
    appearance: none;
    height: 18px;
    padding-left: 3px;
    background: #fff url("data:image/svg+xml,%3Csvg xmlns='http://www.w3.org/2000/svg' width='7' height='4'%3E%3Cpath d='M0 0h7L3.500 4z'/%3E%3C/svg%3E") no-repeat right 4px center;
}

.zoom {
    width: 52px;
}

.style {
    width: 93px;
    margin-left: 3px;
    margin-right: 7px;
    border: 1px solid #a0a0a0;
    background-color: #f0f0f0;
}

.fontbox {
    display: flex;
    align-items: center;
    margin-right: 6px;
    background: #fff;
}

.fontbox .font {
    width: 127px;
    padding-left: 0;
}

.size {
    width: 39px;
}

.stub {
    width: 14px;
    height: 4px;
    margin-left: 63px;
    border: 1px solid #fff;
    border-right-color: #a0a0a0;
    border-bottom-color: #a0a0a0;
}

/* work area */
.main {
    display: flex;
    flex: 1;
    min-height: 0;
}

.objectbar {
    width: 27px;
    padding: 1px 0 0 2px;
}

.objectbar button {
    height: 23px;
}

.content {
    display: flex;
    flex: 1;
    flex-direction: column;
    min-width: 0;
}

.tabs {
    display: flex;
    align-items: flex-end;
    padding-left: 9px;
    border-bottom: 1px solid #808080;
    background: repeating-conic-gradient(#f0f0f0 0 25%, #fff 0 50%) 0 0 / 2px 2px;
}

.tabs button {
    position: relative;
    z-index: 0;
    height: 16px;
    padding: 0 5px 0 4px;
    white-space: nowrap;
}

/* slanted tab sides */
.tabs button::before,
.tabs button::after {
    content: "";
    position: absolute;
    z-index: -1;
    top: 0;
    bottom: 0;
    width: 52%;
    border-top: 1px solid #a0a0a0;
    background: #fff;
}

.tabs button::before {
    left: 0;
    border-left: 1px solid #a0a0a0;
    border-top-left-radius: 2px;
    transform: skewX(-18deg);
}

.tabs button::after {
    right: 0;
    border-right: 1px solid #808080;
    border-top-right-radius: 2px;
    transform: skewX(18deg);
}

.tabs .active::before,
.tabs .active::after {
    bottom: -1px;
    background: #f0f0f0;
}

.pagetabs {
    height: 18px;
}

.panes {
    display: flex;
    flex: 1;
    min-height: 0;
    padding-top: 3px;
}

.handle {
    display: flex;
    align-items: center;
    gap: 3px;
    height: 11px;
    padding: 0 2px 0 2px;
}

.handle i {
    flex: 1;
    height: 5px;
    border: 1px solid #a0a0a0;
    border-width: 1px 1px 1px 0;
    background: #f8f8f8;
}

.handle button {
    display: flex;
    align-items: center;
    justify-content: center;
    width: 10px;
    height: 10px;
    border: 1px solid #fff;
    border-right-color: #888;
    border-bottom-color: #888;
}

.handle svg {
    width: 7px;
    height: 7px;
}

/* object inspector */
.inspector {
    display: flex;
    flex-direction: column;
    width: 223px;
}

.objects {
    height: 21px;
    margin: 3px 2px 8px 0;
    border: 2px solid #808080;
    border-right-color: #d8d8d8;
    border-bottom-color: #d8d8d8;
    padding-left: 2px;
}

.tabline {
    display: flex;
    height: 19px;
    border-bottom: 1px solid #808080;
    background: #f8f8f8;
}

.tabline .tabs {
    width: 117px;
    border-bottom: none;
}

.find {
    margin-left: auto;
    margin-right: 3px;
}

.propbox {
    display: flex;
    flex: 1;
    min-height: 0;
    padding: 1px 0 0 1px;
    border: 1px solid #808080;
    border-top: none;
    overflow: hidden;
}

.props {
    flex: 1;
    table-layout: fixed;
    border-collapse: collapse;
    align-self: flex-start;
    background: #fff;
}

.props tr {
    height: 16px;
}

.props th,
.props td {
    height: 16px;
    padding: 0 0 0 2px;
    border-bottom: 1px solid #f0f0f0;
    line-height: 15px;
    overflow: hidden;
    white-space: nowrap;
}

.props th {
    width: 110px;
    max-width: 110px;
    padding-left: 12px;
    border-right: 1px solid #f0f0f0;
    font-weight: normal;
    text-align: left;
}

.props td {
    position: relative;
    color: #000080;
}

.props .selected th,
.props .selected td {
    background: #f0f0f0;
    border-color: #f0f0f0;
    color: #000;
}

.props .bold th,
.props .bold td {
    font-weight: bold;
}

.props .group th {
    padding-left: 2px;
}

.props label {
    display: flex;
    align-items: center;
    gap: 2px;
}

.props input {
    appearance: none;
    width: 11px;
    height: 11px;
    border: 1px solid #808080;
    background: #fff;
}

.props input:checked {
    background: #fff url("data:image/svg+xml,%3Csvg xmlns='http://www.w3.org/2000/svg' width='9' height='9'%3E%3Cpath d='M1.500 4l2 2.500L7.500 1.500' fill='none' stroke='%23000' stroke-width='2'/%3E%3C/svg%3E");
}

.swatch {
    display: inline-block;
    width: 11px;
    height: 11px;
    margin-right: 3px;
    border: 1px solid #555;
    background: #000;
    vertical-align: -2px;
}

.dots {
    position: absolute;
    top: 0;
    right: 1px;
    width: 15px;
    height: 15px;
    border: 1px solid #fff;
    border-right-color: #808080;
    border-bottom-color: #808080;
    background: repeating-linear-gradient(90deg, #000 0 2px, transparent 2px 3px) 3px 6px / 8px 2px no-repeat #f0f0f0;
}

.plus,
.minus {
    display: inline-block;
    width: 9px;
    height: 9px;
    margin-right: 2px;
    border: 1px solid #808080;
    background: linear-gradient(#000, #000) center / 5px 1px no-repeat, #fff;
}

.plus {
    background: linear-gradient(#555, #555) center / 5px 1px no-repeat, linear-gradient(#555, #555) center / 1px 5px no-repeat, #fff;
}

.propscroll {
    width: 18px;
    padding: 18px 0 46px 8px;
}

.propscroll i {
    display: block;
    width: 2px;
    height: 100%;
    background: #858585;
}

.hint {
    height: 65px;
    margin-top: 4px;
    border: 1px solid #a0a0a0;
    background: #fff;
}

.hint h2 {
    background: #ffffe1;
    line-height: 17px;
}

/* report designer */
.splitter {
    display: flex;
    align-items: center;
    width: 6px;
}

.splitter i {
    width: 6px;
    height: 34px;
    background: radial-gradient(#888 1px, transparent 1px) 0 0 / 5px 5px #c8c8c8;
}

.designer {
    display: flex;
    flex: 1;
    min-width: 0;
    padding-left: 3px;
}

.hruler,
.vruler {
    display: flex;
    background: #fff;
    font-family: "Liberation Sans", sans-serif;
    font-size: 10px;
    line-height: 14px;
    overflow: hidden;
}

.hruler span,
.vruler span {
    display: flex;
    align-items: center;
    flex: none;
    gap: 1px;
}

.hruler span {
    width: 53px;
}

/* one centimetre: a long mark at the half, small marks between */
.hruler span::before,
.hruler span::after {
    content: "";
    flex: 1;
    height: 4px;
    background: linear-gradient(#000, #000) 0 0 / 1px 4px no-repeat, repeating-linear-gradient(90deg, #000 0 1px, transparent 1px 5px) 0 1px / 100% 2px no-repeat;
}

.hruler span::after {
    background: repeating-linear-gradient(90deg, transparent 0 3px, #000 3px 4px, transparent 4px 5px) 0 1px / 100% 2px no-repeat;
}

.vruler {
    width: 13px;
    margin-top: 24px;
    margin-bottom: 1px;
    flex-direction: column;
}

.vruler span {
    height: 53px;
    writing-mode: vertical-rl;
    transform: rotate(180deg);
    line-height: 13px;
}

.vruler span::before,
.vruler span::after {
    content: "";
    flex: 1;
    width: 4px;
    background: repeating-linear-gradient(transparent 0 3px, #000 3px 4px, transparent 4px 5px) 1px 0 / 2px 100% no-repeat;
}

.vruler span::before {
    background: linear-gradient(#000, #000) 0 0 / 4px 1px no-repeat, repeating-linear-gradient(#000 0 1px, transparent 1px 5px) 1px 0 / 2px 100% no-repeat;
}

.sheet {
    display: flex;
    flex: 1;
    flex-direction: column;
    min-width: 0;
    padding-top: 2px;
    padding-left: 5px;
}

.hruler {
    position: relative;
    height: 14px;
    margin-left: 65px;
    padding-left: 28px;
    background: repeating-linear-gradient(90deg, transparent 0 4px, #000 4px 5px) 0 6px / 26px 2px no-repeat #fff;
}

.cursor {
    position: absolute;
    left: 117px;
    top: 0;
    width: 1px;
    height: 14px;
    background: #000;
}

.canvas {
    flex: 1;
    min-height: 0;
    margin-top: 5px;
    padding-left: 52px;
    border-left: 10px solid #808080;
    background: linear-gradient(#555, #555) 0 0 / 1px 100% no-repeat, #fff;
    overflow: hidden;
}

.page {
    display: flex;
    flex-direction: column;
    gap: 5px;
    height: 100%;
    margin-top: -12px;
    border-left: 1px dashed #b0b0b0;
}

.band {
    position: relative;
    flex: none;
    height: 58px;
    border: 1px solid #808080;
    border-right: none;
    background: #fff;
}

.band h3 {
    height: 25px;
    padding-left: 5px;
    background: #f0f0f0;
    font-size: 15px;
    font-weight: normal;
    line-height: 22px;
}

.band.data {
    height: 79px;
}

.band.data h3 {
    background: #dfa62f;
}

.band.netto {
    height: 64px;
}

.band.text {
    height: 370px;
}

.band .marked {
    background: linear-gradient(90deg, #f00 1px, transparent 1px 3px, #f00 3px) 2px 4px / 4px 9px no-repeat #f0f0f0;
}

/* report objects on the design surface, marked by their corners */
.obj {
    position: absolute;
    height: 27px;
    padding-left: 3px;
    background:
        linear-gradient(#000, #000) 0 0 / 4px 1px,
        linear-gradient(#000, #000) 0 0 / 1px 4px,
        linear-gradient(#000, #000) 100% 0 / 4px 1px,
        linear-gradient(#000, #000) 100% 0 / 1px 4px,
        linear-gradient(#000, #000) 0 100% / 4px 1px,
        linear-gradient(#000, #000) 0 100% / 1px 4px,
        linear-gradient(#000, #000) 100% 100% / 4px 1px,
        linear-gradient(#000, #000) 100% 100% / 1px 4px;
    background-repeat: no-repeat;
    font-family: "Liberation Sans", sans-serif;
    font-size: 19px;
    line-height: 26px;
    white-space: nowrap;
}

.o1 { left: 52px; top: 25px; width: 59px; }
.o2 { left: 110px; top: 25px; width: 65px; }
.o3 { left: 185px; top: 25px; width: 700px; }
.o4 { left: 185px; top: 51px; width: 700px; }
.t1 { left: 52px; top: 37px; width: 203px; }
.t2 { left: 264px; top: 37px; width: 600px; }
.t3 { left: 52px; top: 84px; width: 203px; }
.t4 { left: 264px; top: 84px; width: 600px; }
.t5 { left: 52px; top: 132px; width: 113px; }
.t6 { left: 264px; top: 127px; width: 600px; }
.t7 { left: 264px; top: 164px; width: 113px; }
.t8 { left: 385px; top: 164px; width: 600px; }
.t9 { left: 264px; top: 201px; width: 451px; }

.hscroll {
    height: 17px;
    padding: 8px 0 0 17px;
}

.hscroll i {
    display: block;
    width: 75%;
    height: 2px;
    background: #858585;
}

.vscroll {
    width: 16px;
    padding: 81px 0 0 8px;
}

.vscroll i {
    display: block;
    width: 2px;
    height: 26px;
    background: #858585;
}

/* data pane */
.datapane {
    position: relative;
    display: flex;
    flex-direction: column;
    width: 188px;
}

.datapane .tabs {
    flex: none;
    height: 19px;
    padding-left: 8px;
}

.datapane .tabs button {
    padding: 0 7px 0 5px;
}

.databox {
    display: flex;
    flex: 1;
    flex-direction: column;
    min-height: 0;
    margin-right: 1px;
    padding: 2px 2px 1px 2px;
    border: 1px solid #a0a0a0;
    border-top: none;
}

.datatools {
    display: flex;
    align-items: center;
    height: 24px;
    padding-left: 1px;
}

.datatools .sep {
    margin: 0 12px;
}

.datatools .field {
    width: 20px;
    height: 20px;
    margin-left: auto;
    background: #5aa5e6;
    font-family: "Liberation Serif", serif;
}

.field b {
    width: 12px;
    height: 12px;
    background: #fff;
    line-height: 12px;
}

.treebox {
    display: flex;
    flex: 1;
    min-height: 0;
}

.tree {
    flex: 1;
    background: #fff;
    overflow: hidden;
}

.root {
    display: flex;
    align-items: center;
    height: 16px;
    padding-left: 4px;
}

.root svg {
    width: 14px;
    height: 14px;
    margin: 0 6px 0 5px;
}

.root .chev {
    width: 12px;
    margin: 0 4px 0 auto;
}

.tree ul {
    margin-left: 27px;
    border-left: 1px dotted #888;
    list-style: none;
}

.tree li {
    display: flex;
    align-items: center;
    height: 16px;
    white-space: nowrap;
}

.tree li::before {
    content: "";
    width: 11px;
    border-top: 1px dotted #888;
}

.tree li svg,
.tree li i {
    width: 13px;
    height: 13px;
    margin-right: 6px;
}

.tree li i {
    border: 1px solid #7f9fbf;
    font: bold 11px/11px "Liberation Serif", serif;
    text-align: center;
}

.tree li .num {
    font: 9px/10px "Liberation Sans", sans-serif;
}

.treescroll {
    display: flex;
    align-items: flex-end;
    width: 16px;
    padding: 0 0 121px 7px;
}

.treescroll i {
    width: 2px;
    height: 38px;
    background: #858585;
}

.treehscroll {
    height: 17px;
    padding: 7px 0 0 17px;
}

.treehscroll i {
    display: block;
    width: 98px;
    height: 2px;
    background: #858585;
}

/* pen marks drawn over the window */
.mark {
    position: absolute;
    z-index: 2;
    border: 3px solid #3f48cc;
    pointer-events: none;
}

.mark-tab {
    left: -8px;
    top: 2px;
    width: 57px;
    height: 35px;
    border-radius: 8px;
}

.mark-tree {
    left: -16px;
    right: 7px;
    top: 54px;
    bottom: 18px;
    border-radius: 32px / 90px;
}

.mark-address {
    left: 17px;
    top: 115px;
    width: 657px;
    height: 127px;
    border-radius: 90px / 22px;
}

/* status bar */
.statusbar {
    display: flex;
    gap: 3px;
    height: 22px;
    padding: 2px 0 1px;
}

.statusbar span {
    display: flex;
    align-items: center;
    border: 1px solid #a0a0a0;
    border-right-color: #fff;
    border-bottom-color: #fff;
}

.units {
    width: 75px;
}

.pos {
    width: 228px;
    padding-left: 2px;
}

.name {
    flex: 1;
}

.grip {
    width: 13px;
    height: 13px;
    align-self: flex-end;
}
```
